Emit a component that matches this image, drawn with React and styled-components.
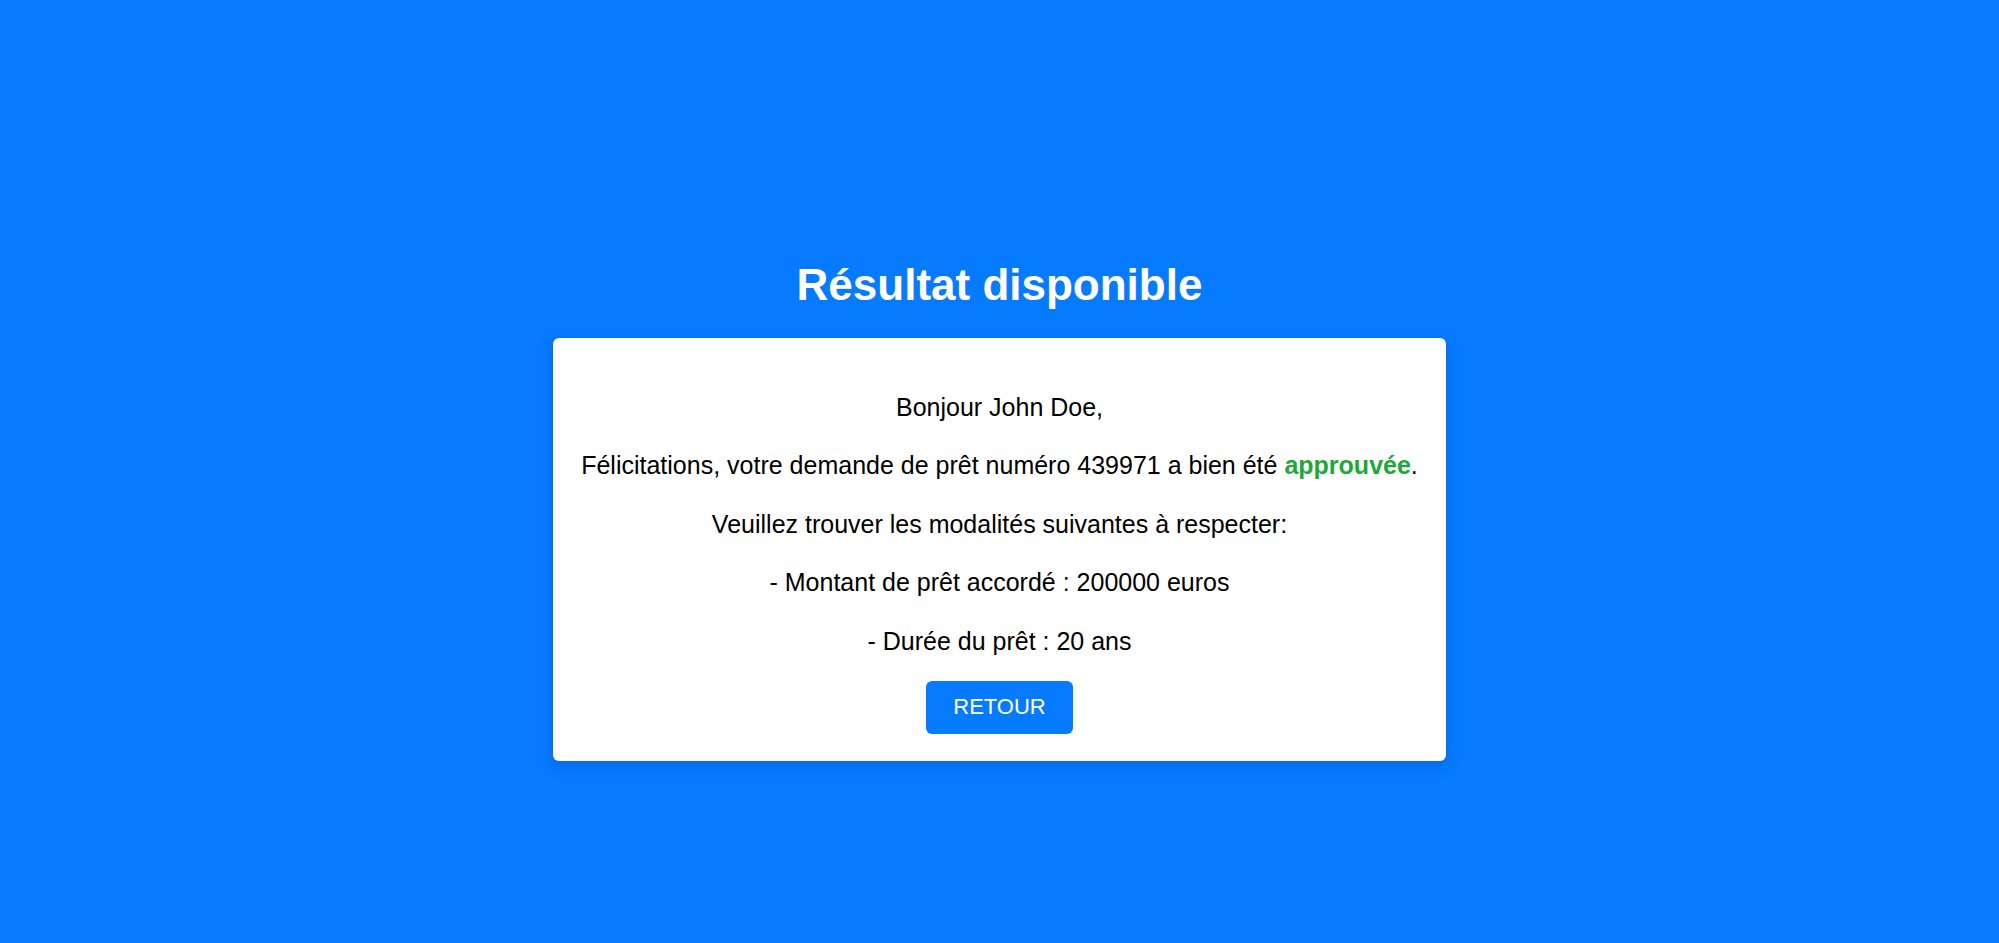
import React from "react";
import styled, { createGlobalStyle } from "styled-components";

const GlobalStyle = createGlobalStyle`
  html, body {
    margin: 0;
    padding: 0;
    background: #077bff;
  }
  body {
    font-family: "Liberation Sans", Arial, sans-serif;
  }
`;

const Page = styled.main`
  box-sizing: border-box;
  width: 100%;
  height: 943px;
  background: #077bff;
  display: flex;
  flex-direction: column;
  align-items: center;
  padding-top: 260px;
`;

const Title = styled.h1`
  margin: 0;
  color: #ffffff;
  font-size: 44px;
  line-height: 50px;
  font-weight: 700;
  text-align: center;
`;

const Card = styled.section`
  box-sizing: border-box;
  margin-top: 28px;
  width: 893px;
  height: 423px;
  background: #ffffff;
  border-radius: 6px;
  box-shadow: 0 4px 14px rgba(0, 40, 120, 0.25);
  display: flex;
  flex-direction: column;
  align-items: center;
  padding: 53.5px 20px 26px;
`;

const Line = styled.p`
  margin: 0 0 28.6px;
  color: #000000;
  font-size: 25px;
  line-height: 30px;
  text-align: center;
  white-space: nowrap;
  &:last-of-type {
    margin-bottom: 25px;
  }
`;

const Approved = styled.strong`
  color: #1fa83a;
  font-weight: 700;
`;

const Button = styled.button`
  width: 147px;
  height: 53px;
  border: none;
  border-radius: 6px;
  background: #077bff;
  color: #ffffff;
  font-family: "Liberation Sans", Arial, sans-serif;
  font-size: 22px;
  cursor: pointer;
`;

export default function App() {
  return (
    <>
      <GlobalStyle />
      <Page>
        <Title>Résultat disponible</Title>
        <Card>
          <Line>Bonjour John Doe,</Line>
          <Line>
            Félicitations, votre demande de prêt numéro 439971 a bien été{" "}
            <Approved>approuvée</Approved>.
          </Line>
          <Line>Veuillez trouver les modalités suivantes à respecter:</Line>
          <Line>- Montant de prêt accordé : 200000 euros</Line>
          <Line>- Durée du prêt : 20 ans</Line>
          <Button>RETOUR</Button>
        </Card>
      </Page>
    </>
  );
}
